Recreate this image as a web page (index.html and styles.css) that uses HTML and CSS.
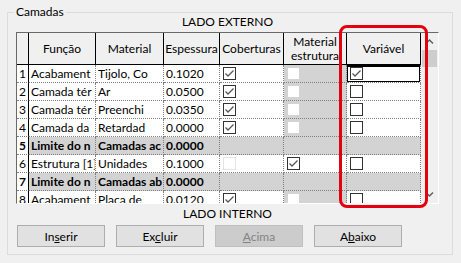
FILE: index.html
```html
<!DOCTYPE html>
<html lang="pt">
<head>
    <meta charset="UTF-8">
    <title>Camadas</title>
    <link rel="stylesheet" href="styles.css">
</head>
<body>

<fieldset class="group">
    <legend>Camadas</legend>
    <div class="side-label top">LADO EXTERNO</div>

    <div class="table-frame">
        <div class="table">
            <div class="hd"></div>
            <div class="hd">Função</div>
            <div class="hd">Material</div>
            <div class="hd">Espessura</div>
            <div class="hd">Coberturas</div>
            <div class="hd">Material estrutura</div>
            <div class="hd">Variável</div>

            <!-- 1 -->
            <div class="c num">1</div>
            <div class="c">Acabament</div>
            <div class="c">Tijolo, Co</div>
            <div class="c">0.1020</div>
            <div class="c box"><svg class="chk" viewBox="0 0 13 13"><rect x=".5" y=".5" width="12" height="12"/><path d="M2.5 6.5L5 9l5.5-5.5"/></svg></div>
            <div class="c box gray"><span class="off"></span></div>
            <div class="c box focus"><svg class="chk" viewBox="0 0 13 13"><rect x=".5" y=".5" width="12" height="12"/><path d="M2.5 6.5L5 9l5.5-5.5"/></svg></div>

            <!-- 2 -->
            <div class="c num">2</div>
            <div class="c">Camada tér</div>
            <div class="c">Ar</div>
            <div class="c">0.0500</div>
            <div class="c box"><svg class="chk" viewBox="0 0 13 13"><rect x=".5" y=".5" width="12" height="12"/><path d="M2.5 6.5L5 9l5.5-5.5"/></svg></div>
            <div class="c box gray"><span class="off"></span></div>
            <div class="c box"><svg class="chk" viewBox="0 0 13 13"><rect x=".5" y=".5" width="12" height="12"/></svg></div>

            <!-- 3 -->
            <div class="c num">3</div>
            <div class="c">Camada tér</div>
            <div class="c">Preenchi</div>
            <div class="c">0.0350</div>
            <div class="c box"><svg class="chk" viewBox="0 0 13 13"><rect x=".5" y=".5" width="12" height="12"/><path d="M2.5 6.5L5 9l5.5-5.5"/></svg></div>
            <div class="c box gray"><span class="off"></span></div>
            <div class="c box"><svg class="chk" viewBox="0 0 13 13"><rect x=".5" y=".5" width="12" height="12"/></svg></div>

            <!-- 4 -->
            <div class="c num">4</div>
            <div class="c">Camada da</div>
            <div class="c">Retardad</div>
            <div class="c">0.0000</div>
            <div class="c box"><svg class="chk" viewBox="0 0 13 13"><rect x=".5" y=".5" width="12" height="12"/><path d="M2.5 6.5L5 9l5.5-5.5"/></svg></div>
            <div class="c box gray"><span class="off"></span></div>
            <div class="c box"><svg class="chk" viewBox="0 0 13 13"><rect x=".5" y=".5" width="12" height="12"/></svg></div>

            <!-- 5 -->
            <div class="c num b">5</div>
            <div class="c gray b">Limite do n</div>
            <div class="c gray b">Camadas ac</div>
            <div class="c gray b">0.0000</div>
            <div class="c gray"></div>
            <div class="c gray"></div>
            <div class="c gray"></div>

            <!-- 6 -->
            <div class="c num">6</div>
            <div class="c">Estrutura [1]</div>
            <div class="c">Unidades</div>
            <div class="c">0.1000</div>
            <div class="c box"><span class="off faint"></span></div>
            <div class="c box"><svg class="chk" viewBox="0 0 13 13"><rect x=".5" y=".5" width="12" height="12"/><path d="M2.5 6.5L5 9l5.5-5.5"/></svg></div>
            <div class="c box"><svg class="chk" viewBox="0 0 13 13"><rect x=".5" y=".5" width="12" height="12"/></svg></div>

            <!-- 7 -->
            <div class="c num b">7</div>
            <div class="c gray b">Limite do n</div>
            <div class="c gray b">Camadas ab</div>
            <div class="c gray b">0.0000</div>
            <div class="c gray"></div>
            <div class="c gray"></div>
            <div class="c gray"></div>

            <!-- 8 -->
            <div class="c num">8</div>
            <div class="c">Acabament</div>
            <div class="c">Placa de</div>
            <div class="c">0.0120</div>
            <div class="c box"><svg class="chk" viewBox="0 0 13 13"><rect x=".5" y=".5" width="12" height="12"/><path d="M2.5 6.5L5 9l5.5-5.5"/></svg></div>
            <div class="c box gray"><span class="off"></span></div>
            <div class="c box"><svg class="chk" viewBox="0 0 13 13"><rect x=".5" y=".5" width="12" height="12"/></svg></div>
        </div>

        <div class="vscroll">
            <div class="arrow"><svg viewBox="0 0 17 17"><path d="M5 10.5l3.5-3.5 3.5 3.5"/></svg></div>
            <div class="thumb"></div>
            <div class="arrow"><svg viewBox="0 0 17 17"><path d="M5 6.5l3.5 3.5 3.5-3.5"/></svg></div>
        </div>
    </div>

    <div class="side-label bottom">LADO INTERNO</div>

    <div class="buttons">
        <button class="btn">In<u>s</u>erir</button>
        <button class="btn">Ex<u>c</u>luir</button>
        <button class="btn" disabled><u>A</u>cima</button>
        <button class="btn">A<u>b</u>aixo</button>
    </div>
</fieldset>

<div class="callout"></div>

</body>
</html>
```

FILE: styles.css
```css
body {
    margin: 0;
    background: #f0f0f0;
    font-family: Lato, "Noto Sans", sans-serif;
    font-size: 12px;
    color: #000;
}
.group {
    margin: 4px 8px 0 7px;
    padding: 0 12px 7px 8px;
    border: 1px solid #dcdcdc;
    min-inline-size: 0;
}
.group legend {
    padding: 0 2px;
    margin-left: -2px;
    line-height: 16px;
}
.side-label {
    width: 423px;
    height: 12px;
    line-height: 12px;
    text-align: center;
}
.side-label.top {
    margin: -4px 0 4px;
}
.side-label.bottom {
    margin: 4px 0 5px;
}
.table-frame {
    display: flex;
    width: 423px;
    height: 172px;
    box-sizing: border-box;
    border: 1px solid;
    border-color: #696969 #fff #fff #696969;
}
.table {
    display: grid;
    grid-template-columns: 12px 67px 68px 56px 64px 63px 74px;
    grid-template-rows: 32px;
    grid-auto-rows: 18px;
    align-content: start;
    width: 404px;
    height: 170px;
    overflow: hidden;
}
.hd {
    display: flex;
    align-items: center;
    justify-content: center;
    text-align: center;
    line-height: 14px;
    background: #f0f0f0;
    border-right: 1px solid #000;
    border-bottom: 1px solid #000;
    box-sizing: border-box;
    overflow: hidden;
}
.c {
    box-sizing: border-box;
    padding-left: 2px;
    line-height: 17px;
    white-space: nowrap;
    overflow: hidden;
    background: #fff;
    border-right: 1px dotted #808080;
    border-bottom: 1px dotted #808080;
}
.c.num {
    border-right: 1px solid #000;
}
.c.gray {
    background: #d3d3d3;
}
.b {
    font-weight: bold;
}
.c.box {
    display: flex;
    align-items: center;
    padding-left: 3px;
}
.c.focus {
    box-shadow: inset 0 0 0 1px #000, inset 0 1px 0 1px #000;
}
.chk {
    width: 13px;
    height: 13px;
}
.chk rect {
    fill: #fff;
    stroke: #333;
}
.chk path {
    fill: none;
    stroke: #555;
    stroke-width: 1.3;
}
.off {
    width: 11px;
    height: 11px;
    margin-left: 1px;
    background: #fff;
}
.off.faint {
    box-shadow: 0 0 0 1px #e4e4e4;
}
.vscroll {
    display: flex;
    flex-direction: column;
    width: 17px;
    background: #f0f0f0;
}
.arrow {
    height: 17px;
}
.arrow svg {
    width: 17px;
    height: 17px;
}
.arrow path {
    fill: none;
    stroke: #606060;
    stroke-width: 1.5;
}
.arrow:last-child {
    margin-top: auto;
}
.thumb {
    height: 17px;
    margin: 0 1px;
    background: #cdcdcd;
}
.buttons {
    display: flex;
    gap: 11px;
    padding-left: 1px;
}
.btn {
    width: 88px;
    height: 22px;
    padding: 0;
    box-sizing: border-box;
    font: inherit;
    color: #000;
    background: #e1e1e1;
    border: 1px solid #adadad;
}
.btn:disabled {
    color: #838383;
    background: #cccccc;
    border-color: #bfbfbf;
}
.callout {
    position: absolute;
    left: 339px;
    top: 25px;
    width: 89px;
    height: 183px;
    box-sizing: border-box;
    border: 3px solid #e3000f;
    border-radius: 8px;
    pointer-events: none;
}
```
